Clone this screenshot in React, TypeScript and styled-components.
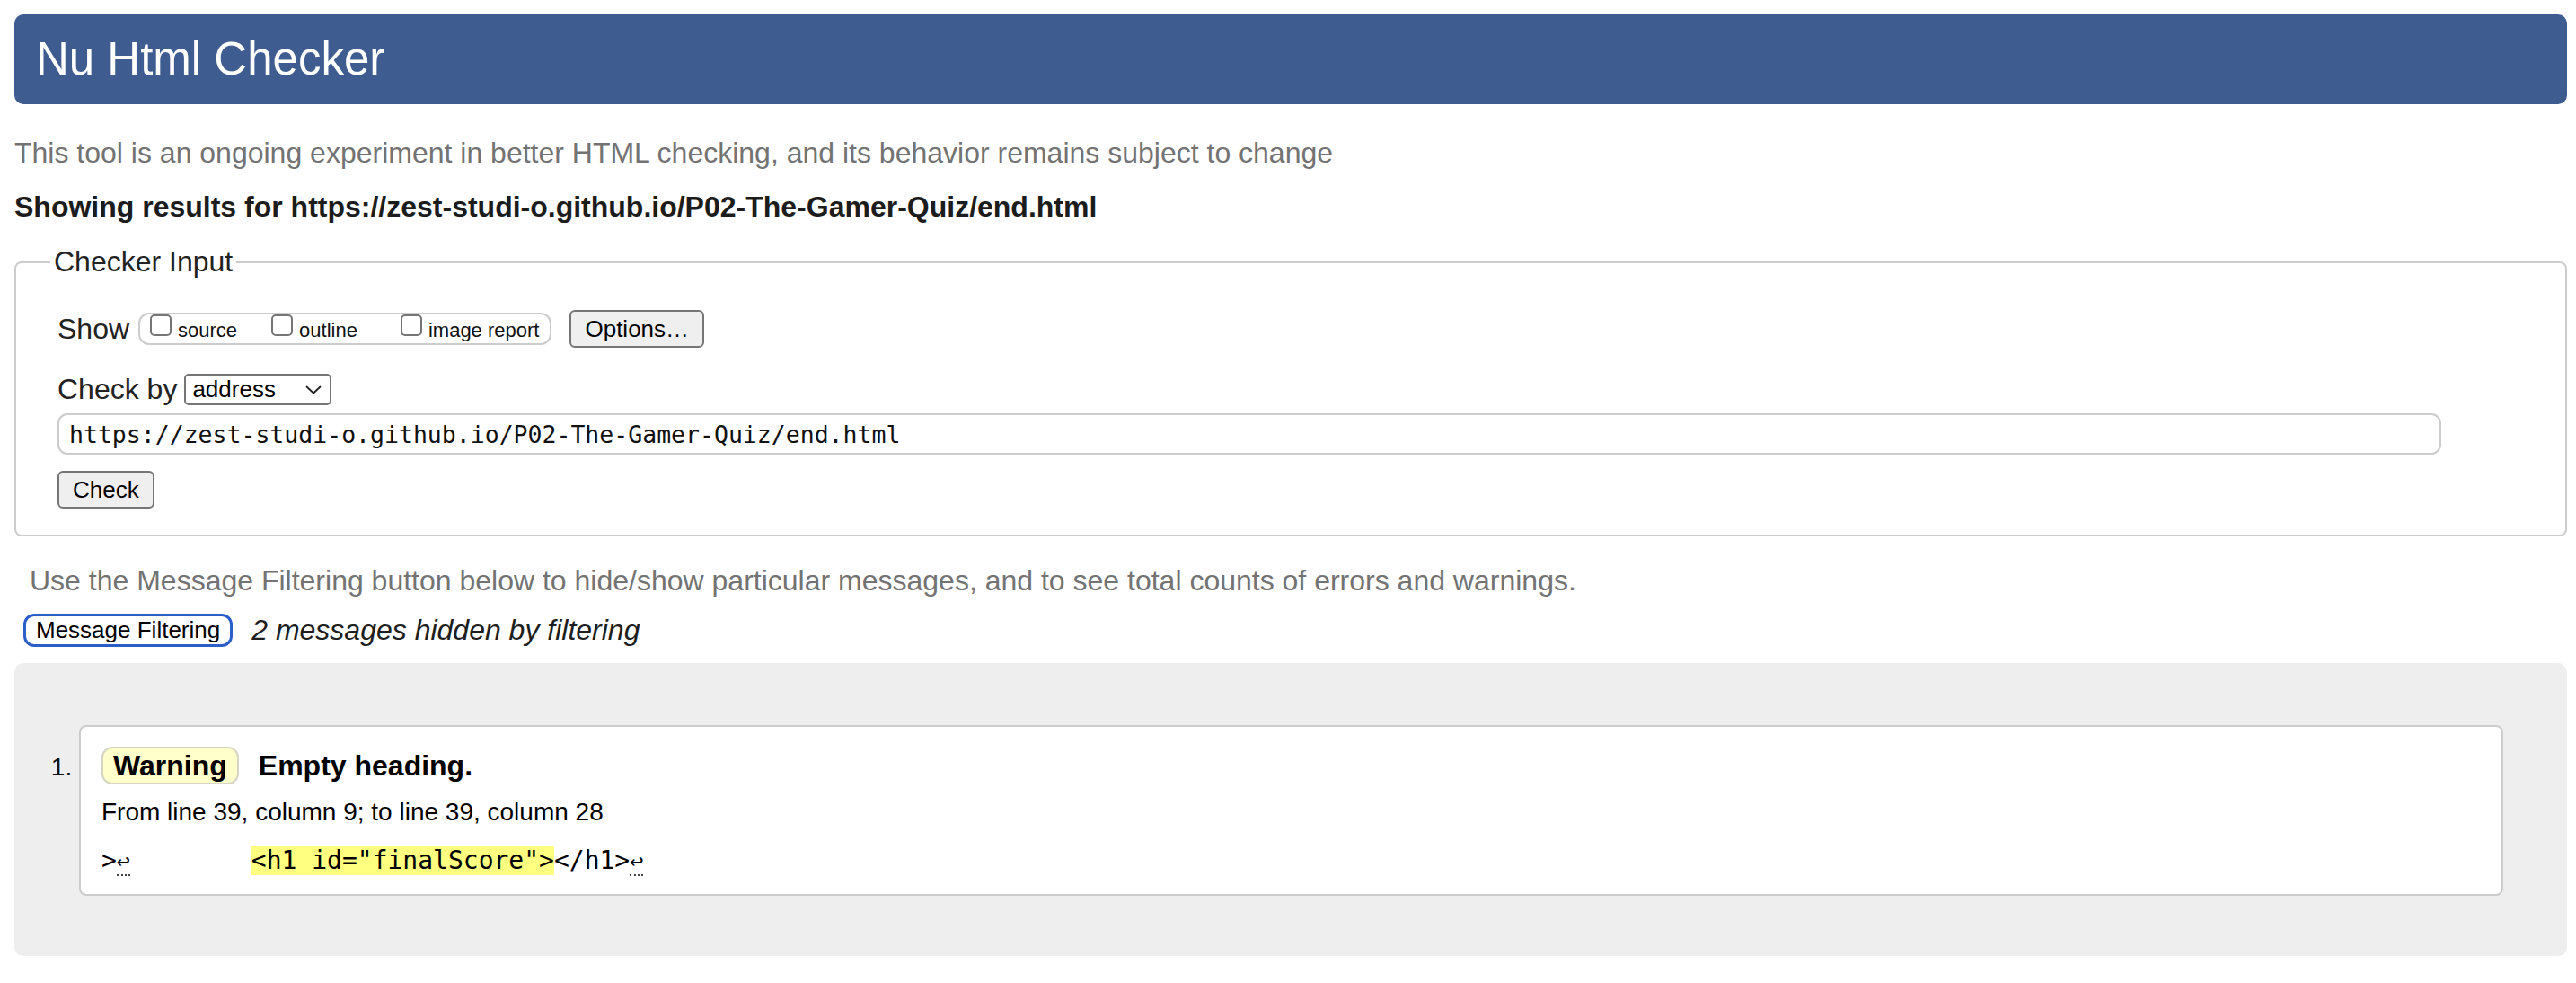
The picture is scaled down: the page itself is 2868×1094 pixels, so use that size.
import React from "react";
import styled, { createGlobalStyle } from "styled-components";

const Global = createGlobalStyle`
  html, body { margin: 0; padding: 0; background: #ffffff; }
  body { font-family: "Liberation Sans", Arial, Helvetica, sans-serif; color: #222222; }
  * { box-sizing: border-box; }
`;

const Page = styled.div`
  padding: 16px 10px 30px 16px;
`;

const Header = styled.h1`
  margin: 0;
  height: 100px;
  padding: 0 24px;
  line-height: 100px;
  font-size: 51px;
  font-weight: normal;
  color: #ffffff;
  background: #3e5c90;
  border-radius: 10px;
`;

const Intro = styled.p`
  margin: 36px 0 0;
  font-size: 32px;
  line-height: 37px;
  color: #737373;
`;

const Showing = styled.p`
  margin: 23px 0 0;
  font-size: 32px;
  line-height: 37px;
  font-weight: bold;
  color: #1c1c1c;
`;

const Fieldset = styled.fieldset`
  margin: 24px 0 0;
  padding: 0 46px 29px 46px;
  border: 2px solid #cccccc;
  border-radius: 8px;
  min-width: 0;
`;

const Legend = styled.legend`
  margin-left: -8px;
  padding: 0 4px;
  font-size: 32px;
  line-height: 37px;
  color: #222222;
`;

const Row = styled.div<{ $top: number }>`
  display: flex;
  align-items: center;
  margin-top: ${(p) => p.$top}px;
`;

const Label = styled.span`
  font-size: 32px;
  line-height: 37px;
  color: #222222;
`;

const CheckGroup = styled.div`
  display: flex;
  align-items: flex-start;
  height: 36px;
  margin-left: 10px;
  padding: 0 12px 0 11px;
  border: 2px solid #cccccc;
  border-radius: 12px;
`;

const CheckLabel = styled.label<{ $gap: number }>`
  display: flex;
  align-items: flex-start;
  margin-left: ${(p) => p.$gap}px;
`;

const Box = styled.input`
  appearance: none;
  -webkit-appearance: none;
  width: 24px;
  height: 24px;
  margin: 0;
  border: 2px solid #767676;
  border-radius: 5px;
  background: #ffffff;
`;

const CheckText = styled.span`
  margin: 7px 0 0 7px;
  font-size: 22px;
  line-height: 22px;
  color: #111111;
`;

const Button = styled.button<{ $left?: number }>`
  height: 42px;
  margin-left: ${(p) => p.$left ?? 0}px;
  padding: 0 15px;
  font-family: "Liberation Sans", Arial, sans-serif;
  font-size: 26px;
  color: #000000;
  background: #efefef;
  border: 2px solid #767676;
  border-radius: 6px;
`;

const FakeSelect = styled.div`
  display: flex;
  align-items: center;
  justify-content: space-between;
  width: 164px;
  height: 35px;
  margin-left: 8px;
  padding: 0 9px 0 7px;
  border: 2px solid #767676;
  border-radius: 5px;
  font-size: 26px;
  color: #000000;
  background: #ffffff;
`;

const UrlInput = styled.input`
  display: block;
  width: calc(100% - 92px);
  height: 46px;
  margin: 8px 0 0;
  padding: 0 11px;
  border: 2px solid #cccccc;
  border-radius: 11px;
  font-family: "DejaVu Sans Mono", "Liberation Mono", monospace;
  font-size: 26.5px;
  color: #111111;
  background: #ffffff;
  outline: none;
`;

const FilterNote = styled.p`
  margin: 31px 0 0;
  padding-left: 17px;
  font-size: 32px;
  line-height: 37px;
  color: #737373;
`;

const FilterRow = styled.div`
  display: flex;
  align-items: center;
  height: 37px;
  margin-top: 18px;
  padding-left: 10px;
`;

const FilterButton = styled.button`
  height: 37px;
  padding: 0 11px;
  font-family: "Liberation Sans", Arial, sans-serif;
  font-size: 26px;
  line-height: 31px;
  color: #000000;
  background: #ffffff;
  border: 3px solid #2c5ec8;
  border-radius: 12px;
`;

const HiddenNote = styled.em`
  margin-left: 21px;
  font-size: 32px;
  line-height: 37px;
  color: #1e1e1e;
`;

const Results = styled.div`
  margin-top: 18px;
  padding: 69px 71px 67px 72px;
  background: #eeeeee;
  border-radius: 10px;
`;

const List = styled.ol`
  margin: 0;
  padding: 0;
  list-style: decimal outside;
  font-size: 28px;
  color: #111111;
`;

const Card = styled.li`
  padding: 22px 23px 20px;
  background: #ffffff;
  border: 2px solid #cccccc;
  border-radius: 8px;
`;

const MessageLine = styled.p`
  margin: 0;
  line-height: 42px;
  font-size: 32px;
  font-weight: bold;
  color: #000000;
`;

const Badge = styled.strong`
  display: inline-block;
  height: 42px;
  margin-right: 22px;
  padding: 0 11px;
  line-height: 38px;
  background: #ffffcc;
  border: 2px solid #d6d6c2;
  border-radius: 12px;
  vertical-align: top;
`;

const Location = styled.p`
  margin: 15px 0 0;
  font-size: 28px;
  line-height: 32px;
  color: #000000;
`;

const Extract = styled.p`
  margin: 22px 0 0;
  font-family: "DejaVu Sans Mono", "Liberation Mono", monospace;
  font-size: 28px;
  line-height: 32px;
  white-space: pre;
  color: #000000;
`;

const Mark = styled.mark`
  background: #ffff80;
  color: #000000;
  padding: 0;
`;

const LineFeed = styled.span`
  font-size: 25px;
  border-bottom: 2px dotted #444444;
`;

const Chevron = () => (
  <svg width="18" height="10" viewBox="0 0 18 10" fill="none">
    <path d="M1.5 1.5 L9 8.5 L16.5 1.5" stroke="#222" strokeWidth="1.8" strokeLinecap="round" strokeLinejoin="round" />
  </svg>
);

export default function App() {
  return (
    <>
      <Global />
      <Page>
        <Header>Nu Html Checker</Header>
        <Intro>This tool is an ongoing experiment in better HTML checking, and its behavior remains subject to change</Intro>
        <Showing>Showing results for https://zest-studi-o.github.io/P02-The-Gamer-Quiz/end.html</Showing>
        <Fieldset>
          <Legend>Checker Input</Legend>
          <Row $top={35}>
            <Label>Show</Label>
            <CheckGroup>
              <CheckLabel $gap={0}>
                <Box type="checkbox" />
                <CheckText>source</CheckText>
              </CheckLabel>
              <CheckLabel $gap={38}>
                <Box type="checkbox" />
                <CheckText>outline</CheckText>
              </CheckLabel>
              <CheckLabel $gap={48}>
                <Box type="checkbox" />
                <CheckText>image report</CheckText>
              </CheckLabel>
            </CheckGroup>
            <Button $left={20}>Options…</Button>
          </Row>
          <Row $top={28}>
            <Label>Check by</Label>
            <FakeSelect>
              <span>address</span>
              <Chevron />
            </FakeSelect>
          </Row>
          <UrlInput readOnly value="https://zest-studi-o.github.io/P02-The-Gamer-Quiz/end.html" />
          <Row $top={18}>
            <Button>Check</Button>
          </Row>
        </Fieldset>
        <FilterNote>Use the Message Filtering button below to hide/show particular messages, and to see total counts of errors and warnings.</FilterNote>
        <FilterRow>
          <FilterButton>Message Filtering</FilterButton>
          <HiddenNote>2 messages hidden by filtering</HiddenNote>
        </FilterRow>
        <Results>
          <List>
            <Card>
              <MessageLine>
                <Badge>Warning</Badge>Empty heading.
              </MessageLine>
              <Location>From line 39, column 9; to line 39, column 28</Location>
              <Extract>
                {">"}
                <LineFeed>↩</LineFeed>
                {"        "}
                <Mark>{'<h1 id="finalScore">'}</Mark>
                {"</h1>"}
                <LineFeed>↩</LineFeed>
              </Extract>
            </Card>
          </List>
        </Results>
      </Page>
    </>
  );
}
